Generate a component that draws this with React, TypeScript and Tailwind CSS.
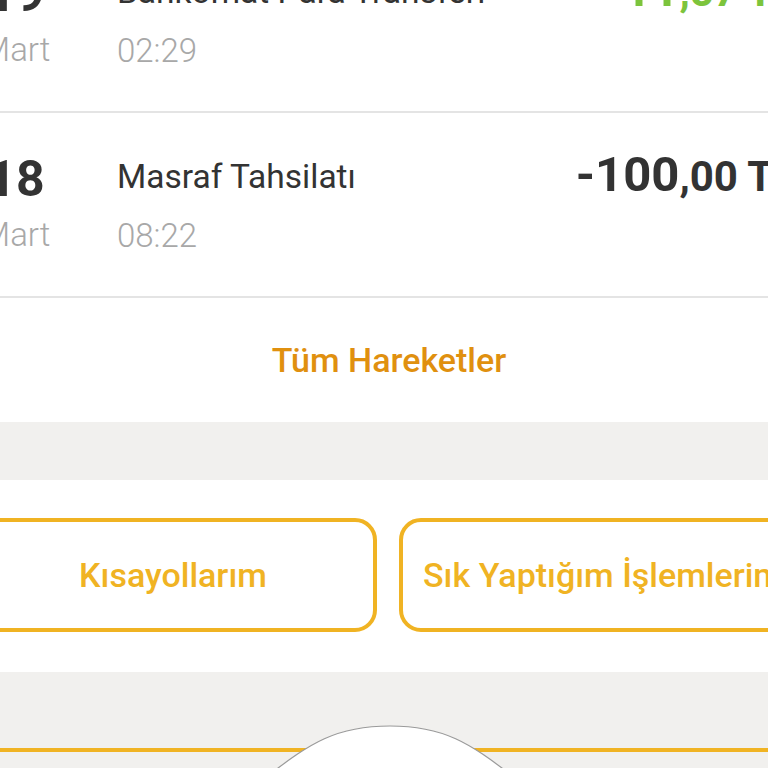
import React from "react";

type Txn = {
  day: string;
  month: string;
  title: string;
  time: string;
  whole: string;
  frac: string;
  positive?: boolean;
};

const txns: Txn[] = [
  { day: "19", month: "Mart", title: "Bankomat Para Transferi", time: "02:29", whole: "11", frac: ",57", positive: true },
  { day: "18", month: "Mart", title: "Masraf Tahsilatı", time: "08:22", whole: "-100", frac: ",00" },
];

const TxnRow = ({ t }: { t: Txn }) => (
  <div className="flex h-[185px] border-b-2 border-[#e4e4e4]">
    {/* date */}
    <div className="w-[100px] shrink-0 text-center">
      <div className="mt-[41px] text-[50px] font-bold leading-none text-[#333333]">{t.day}</div>
      <div className="mt-[14px] text-[33px] font-light leading-none text-[#a8a8a8]">{t.month}</div>
    </div>
    {/* description */}
    <div className="ml-[51px] flex-1">
      <div className="mt-[47px] text-[33.5px] leading-none text-[#333333] whitespace-nowrap">{t.title}</div>
      <div className="mt-[25px] text-[33px] font-light leading-none text-[#a8a8a8]">{t.time}</div>
    </div>
    {/* amount */}
    <div
      className={
        t.positive
          ? "mt-[37px] whitespace-nowrap font-bold leading-none text-[#7cc43c]"
          : "mt-[37px] whitespace-nowrap font-bold leading-none text-[#333333]"
      }
    >
      <span className="text-[49px]">{t.whole}</span>
      <span className="text-[42px]">{t.frac} TL</span>
    </div>
  </div>
);

export default function App() {
  return (
    <div
      className="h-[768px] w-[768px] overflow-hidden bg-white"
      style={{ fontFamily: "Roboto, 'Liberation Sans', sans-serif" }}
    >
      {/* transaction list, scrolled */}
      <div className="-mt-[72px] -ml-[34px] w-[830px]">
        {txns.map((t) => (
          <TxnRow key={t.day} t={t} />
        ))}
      </div>

      {/* all transactions link */}
      <div className="flex h-[124px] items-center justify-center pl-[10px]">
        <span className="text-[34px] font-medium text-[#e0900f]">Tüm Hareketler</span>
      </div>

      <div className="h-[58px] bg-[#f1f0ee]" />

      {/* shortcut buttons */}
      <div className="flex h-[192px] gap-[22px] pt-[38px] -ml-[31px] w-[900px]">
        <div className="flex h-[114px] w-[408px] items-center justify-center rounded-[22px] border-4 border-[#f0b323]">
          <span className="text-[34px] font-medium text-[#f0b323]">Kısayollarım</span>
        </div>
        <div className="flex h-[114px] w-[408px] items-center justify-center rounded-[22px] border-4 border-[#f0b323]">
          <span className="whitespace-nowrap text-[34px] font-medium text-[#f0b323]">Sık Yaptığım İşlemlerim</span>
        </div>
      </div>

      {/* bottom bar */}
      <div className="relative h-[96px] bg-[#f1f0ee]">
        <div className="absolute left-0 right-0 top-[76px] h-[4px] bg-[#f0b323]" />
        <svg className="absolute left-[250px] top-[52px]" width="280" height="50" viewBox="0 0 280 50">
          <path
            d="M20 50 C 60 20, 85 2, 140 2 C 195 2, 220 20, 260 50 Z"
            fill="#ffffff"
            stroke="#9a9a9a"
            strokeWidth="1.2"
          />
        </svg>
      </div>
    </div>
  );
}
